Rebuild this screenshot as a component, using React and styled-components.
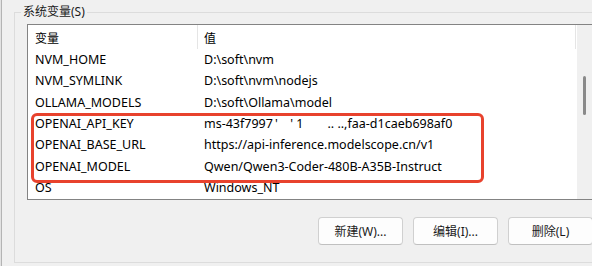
import React from "react";
import styled, { createGlobalStyle } from "styled-components";

const GlobalStyle = createGlobalStyle`
  html, body {
    margin: 0;
    padding: 0;
    background: #f0f0f0;
  }
  body {
    font-family: "Noto Sans", "Noto Sans CJK SC", sans-serif;
    font-size: 12px;
    color: #000;
  }
`;

const variables = [
  { name: "NVM_HOME", value: "D:\\soft\\nvm" },
  { name: "NVM_SYMLINK", value: "D:\\soft\\nvm\\nodejs" },
  { name: "OLLAMA_MODELS", value: "D:\\soft\\Ollama\\model" },
  { name: "OPENAI_API_KEY", value: "ms-43f7997\u2009'\u2009\u2009\u2009\u2009\u2009\u2009' 1\u2009\u2009\u2009\u2009\u2009\u2009\u2009\u2009\u2009\u2009 .. ..,faa-d1caeb698af0" },
  { name: "OPENAI_BASE_URL", value: "https://api-inference.modelscope.cn/v1" },
  { name: "OPENAI_MODEL", value: "Qwen/Qwen3-Coder-480B-A35B-Instruct" },
  { name: "OS", value: "Windows_NT" },
];

function App() {
  return (
    <>
      <GlobalStyle />
      <Page>
        <WindowEdge />
        <GroupBox>
          <Legend>系统变量(S)</Legend>
          <ListView>
            <Table>
              <HeaderRow>
                <NameCell header>变量</NameCell>
                <ValueCell header>值</ValueCell>
              </HeaderRow>
              {variables.map((v) => (
                <Row key={v.name}>
                  <NameCell>{v.name}</NameCell>
                  <ValueCell>{v.value}</ValueCell>
                </Row>
              ))}
            </Table>
            <ScrollBar>
              <Thumb />
            </ScrollBar>
            <Highlight />
          </ListView>
          <ButtonRow>
            <Button>新建(W)...</Button>
            <Button>编辑(I)...</Button>
            <Button>删除(L)</Button>
          </ButtonRow>
        </GroupBox>
      </Page>
    </>
  );
}

const Page = styled.div`
  width: 592px;
  height: 266px;
  display: flex;
  overflow: hidden;
`;

const WindowEdge = styled.div`
  flex: 0 0 2px;
  background: linear-gradient(to right, #e2e2e2 1px, #b4b4b4 1px);
`;

const GroupBox = styled.fieldset`
  flex: 0 0 auto;
  box-sizing: border-box;
  width: 600px;
  height: 257px;
  margin: 6px 0 0 12px;
  padding: 0 0 0 12px;
  border: 1px solid #dcdcdc;
  border-right: none;
  min-width: 0;
`;

const Legend = styled.legend`
  margin-left: -6px;
  padding: 0 2px;
  line-height: 12px;
  color: #1a1a1a;
`;

const ListView = styled.div`
  position: relative;
  box-sizing: border-box;
  width: 566px;
  height: 176px;
  margin-top: 6px;
  display: flex;
  background: #fff;
  border: 1px solid #838383;
  border-right: none;
  overflow: hidden;
`;

const Table = styled.div`
  flex: 0 0 548px;
  display: flex;
  flex-direction: column;
  font-size: 12.5px;
`;

const HeaderRow = styled.div`
  flex: 0 0 24px;
  display: flex;
  align-items: center;
  font-size: 12px;
`;

const Row = styled.div`
  flex: 0 0 21.3px;
  display: flex;
  align-items: center;
`;

const NameCell = styled.div`
  box-sizing: border-box;
  width: 170px;
  height: 100%;
  display: flex;
  align-items: center;
  padding-left: 7px;
  white-space: nowrap;
  border-right: ${({ header }) => (header ? "1px solid #e5e5e5" : "none")};
  padding-top: ${({ header }) => (header ? "2px" : "0")};
`;

const ValueCell = styled.div`
  box-sizing: border-box;
  flex: 1;
  height: 100%;
  display: flex;
  align-items: center;
  padding-left: 6px;
  white-space: pre;
  overflow: hidden;
  border-right: ${({ header }) => (header ? "1px solid #e5e5e5" : "none")};
  padding-top: ${({ header }) => (header ? "2px" : "0")};
`;

const ScrollBar = styled.div`
  flex: 0 0 17px;
  margin-left: 1px;
  background: #f0f0f0;
  padding-top: 51px;
  box-sizing: border-box;
`;

const Thumb = styled.div`
  width: 3px;
  height: 39px;
  margin-left: 6px;
  border-radius: 2px;
  background: #8a8a8a;
`;

const Highlight = styled.div`
  position: absolute;
  left: 3px;
  top: 88px;
  width: 453px;
  height: 70px;
  box-sizing: border-box;
  border: 3px solid #e8422d;
  border-radius: 6px;
  pointer-events: none;
`;

const ButtonRow = styled.div`
  display: flex;
  gap: 10px;
  margin: 17px 0 0 291px;
`;

const Button = styled.button`
  flex: 0 0 85px;
  height: 28px;
  box-sizing: border-box;
  border: 1px solid #d0d0d0;
  border-bottom-color: #c0c0c0;
  border-radius: 4px;
  background: #fdfdfd;
  color: #1a1a1a;
  font-family: "Noto Sans", "Noto Sans CJK SC", sans-serif;
  font-size: 12px;
  padding: 0;
`;

export default App;
